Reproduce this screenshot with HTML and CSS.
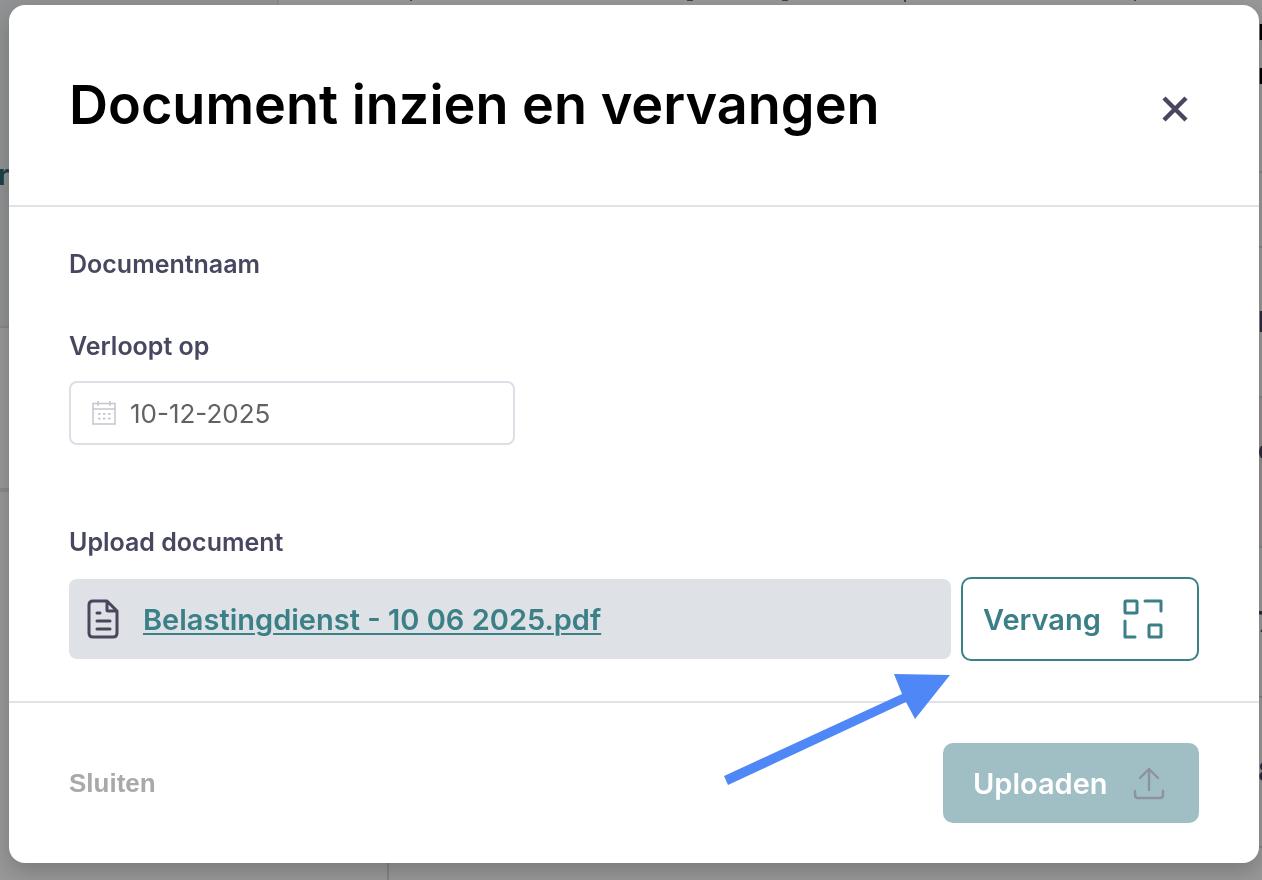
FILE: index.html
```html
<!DOCTYPE html>
<html lang="nl">
<head>
<meta charset="utf-8">
<meta name="viewport" content="width=device-width, initial-scale=1">
<title>Document inzien en vervangen</title>
<link rel="stylesheet" href="styles.css">
</head>
<body>
<div class="backdrop" aria-hidden="true">
  <div class="side">
    <div class="side-item side-active"><span>r</span></div>
    <div class="side-item side-plain"></div>
    <div class="side-rest"></div>
  </div>
  <div class="page">
    <div class="tab-edge"></div>
    <svg class="descenders" width="740" height="2" viewBox="0 0 740 2"><path d="M2 0v1M278 0h6M373 0h6M496 0v2M726 0v1" stroke="#444" stroke-width="2"/></svg>
    <div class="panel-edge"></div>
  </div>
  <div class="list">
    <div class="cell cell-intro"><span>n</span><span>n</span></div>
    <div class="cell cell-head"></div>
    <div class="cell"><span>I</span></div>
    <div class="cell cell-warm"><span>o</span></div>
    <div class="cell"><span>7</span></div>
    <div class="cell"><span>8</span></div>
  </div>
</div>

<main class="stage">
  <section class="modal" role="dialog" aria-modal="true" aria-labelledby="modal-title">
    <header class="modal-header">
      <h1 class="modal-title" id="modal-title">Document inzien en vervangen</h1>
      <button class="close" type="button" aria-label="Venster sluiten">
        <svg width="28" height="28" viewBox="0 0 28 28"><path d="M3 3l22 22M25 3L3 25" fill="none" stroke="#4a465e" stroke-width="4.500"/></svg>
      </button>
    </header>

    <form class="modal-form">
      <div class="modal-body">
        <p class="label">Documentnaam</p>
        <div class="field">
          <label class="label" for="expires">Verloopt op</label>
          <div class="date-box">
            <svg width="24" height="24" viewBox="0 0 24 24" fill="none" stroke="#c3c5cf"><path d="M1 2.500h22v20.500H1zM1 8h22M6 0v5M18 0v5" stroke-width="1.500"/><path d="M6 12.800h13M6 17.700h13" stroke-width="1.800" stroke-dasharray="2.500 2.500"/></svg>
            <input class="date-input" id="expires" type="text" value="10-12-2025">
          </div>
        </div>
        <div class="upload">
          <p class="label">Upload document</p>
          <div class="upload-row">
            <div class="file">
              <svg width="34" height="42" viewBox="0 0 34 42" fill="none" stroke="#4a465e" stroke-width="3" stroke-linecap="round" stroke-linejoin="round"><path d="M20 3H6Q2 3 2 7v28q0 4 4 4h20q4 0 4-4V13zM20 3v9q0 1 1 1h9M10 15h3M10 23h13M10 31h13"/></svg>
              <a class="file-link" href="#">Belastingdienst - 10 06 2025.pdf</a>
            </div>
            <button class="replace" type="button">
              <span>Vervang</span>
              <svg width="42" height="42" viewBox="0 0 42 42" fill="none" stroke="#3b7f87" stroke-width="3" stroke-linecap="round" stroke-linejoin="round"><rect x="3" y="3" width="12" height="12" rx="1"/><rect x="27" y="27" width="12" height="12" rx="1"/><path d="M23 3h16v10M3 23v16h10"/></svg>
            </button>
          </div>
        </div>
      </div>

      <footer class="modal-footer">
        <button class="dismiss" type="button">Sluiten</button>
        <button class="submit" type="submit" disabled>
          <span>Uploaden</span>
          <svg width="32" height="34" viewBox="0 0 32 34" fill="none" stroke="#8d91a2" stroke-width="2.400" stroke-linecap="round" stroke-linejoin="round"><path d="M16 24V3M7 12l9-9 9 9M2 25v4q0 3 3 3h22q3 0 3-3v-4"/></svg>
        </button>
      </footer>
    </form>
    <svg class="pointer" width="228" height="114" viewBox="0 0 228 114" aria-hidden="true"><path d="M4 111L0 102 178 20 170 0l56 1-35 44-9-17z" fill="#4f87f7"/></svg>
  </section>
</main>
</body>
</html>
```
FILE: styles.css
```css
* {
  box-sizing: border-box;
}

body {
  margin: 0;
  min-height: 100vh;
  background: #999;
  font-family: Inter, "Open Sans", sans-serif;
  color: #47485f;
}

h1,
p {
  margin: 0;
}

button,
input {
  font: inherit;
  color: inherit;
}

button {
  border: 0;
  background: none;
  cursor: pointer;
}

svg {
  display: block;
  flex: none;
}

.backdrop {
  position: fixed;
  inset: 0;
  display: flex;
  overflow: hidden;
}

.side {
  display: flex;
  flex-direction: column;
  flex: none;
  width: 277px;
}

.side-active {
  height: 328px;
  padding-top: 158px;
  border-bottom: 2px solid #88898b;
  background: #929395;
  color: #1d4348;
  font-size: 28px;
  font-weight: 700;
  line-height: 34px;
  text-indent: -2px;
}

.side-plain {
  height: 164px;
  border-bottom: 4px solid #8a8b8e;
}

.page {
  display: flex;
  flex: 1;
  flex-direction: column;
  justify-content: space-between;
  position: relative;
}

.tab-edge {
  width: 2px;
  height: 16px;
  background: #8a8b8d;
}

.descenders {
  position: absolute;
  top: 0;
  left: 132px;
}

.panel-edge {
  width: 2px;
  height: 32px;
  margin-left: 110px;
  background: #858585;
}

.list {
  flex: none;
  width: 4px;
  color: #2c2b3c;
  font-size: 28px;
  font-weight: 700;
}

.cell {
  display: flex;
  align-items: center;
  height: 150px;
  border-bottom: 2px solid #858688;
}

.cell-intro {
  flex-direction: column;
  align-items: flex-start;
  height: 173px;
  padding-top: 8px;
  color: #000;
  line-height: 44px;
}

.cell-head {
  height: 75px;
}

.cell-warm {
  padding-bottom: 44px;
  background: #979092;
}

.stage {
  position: relative;
  padding: 5px 3px 17px 9px;
}

.modal {
  position: relative;
  border-radius: 16px;
  background: #fff;
  box-shadow: 0 8px 24px rgba(0, 0, 0, 0.22);
}

.modal-header {
  display: flex;
  align-items: center;
  justify-content: space-between;
  height: 202px;
  padding: 0 60px;
  border-bottom: 2px solid #dfe2e7;
}

.modal-title {
  color: #000;
  font-size: 54px;
  font-weight: 600;
  line-height: 64px;
}

.close {
  margin-top: 8px;
  padding: 10px;
}

.modal-body {
  display: flex;
  flex-direction: column;
  padding: 40px 60px;
}

.label {
  display: block;
  font-size: 25px;
  font-weight: 600;
  line-height: 34px;
}

.field {
  margin-top: 48px;
}

.date-box {
  display: flex;
  align-items: center;
  gap: 14px;
  width: 446px;
  max-width: 100%;
  height: 64px;
  margin-top: 18px;
  padding: 0 21px;
  border: 2px solid #dcdfe6;
  border-radius: 8px;
}

.date-input {
  flex: 1;
  min-width: 0;
  padding: 0;
  border: 0;
  outline: 0;
  background: none;
  color: #606266;
  font-size: 26px;
}

.upload {
  margin-top: 80px;
}

.upload-row {
  display: flex;
  align-items: center;
  gap: 10px;
  margin-top: 18px;
}

.file {
  display: flex;
  align-items: center;
  gap: 22px;
  flex: 1;
  min-width: 0;
  height: 80px;
  padding: 0 18px;
  border-radius: 8px;
  background: #dee1e6;
}

.file-link {
  color: #3b7f87;
  font-size: 29px;
  font-weight: 600;
  text-decoration-thickness: 2px;
  text-underline-offset: 3px;
}

.replace,
.submit {
  display: flex;
  align-items: center;
  justify-content: space-between;
  border-radius: 10px;
  font-size: 29px;
  font-weight: 600;
}

.replace {
  width: 238px;
  height: 84px;
  padding: 0 33px 0 20px;
  border: 2px solid #3b7f87;
  color: #3b7f87;
}

.modal-footer {
  display: flex;
  align-items: center;
  justify-content: space-between;
  padding: 40px 60px;
  border-top: 2px solid #dfe2e7;
}

.dismiss {
  padding: 0;
  color: #a9a9ab;
  font-family: "Liberation Sans", Arial, sans-serif;
  font-size: 26px;
  font-weight: 700;
}

.submit {
  width: 256px;
  height: 80px;
  padding: 0 34px 0 30px;
  background: #9fbfc4;
  color: #fff;
}

.pointer {
  position: absolute;
  right: 307px;
  bottom: 75px;
  pointer-events: none;
}
```
